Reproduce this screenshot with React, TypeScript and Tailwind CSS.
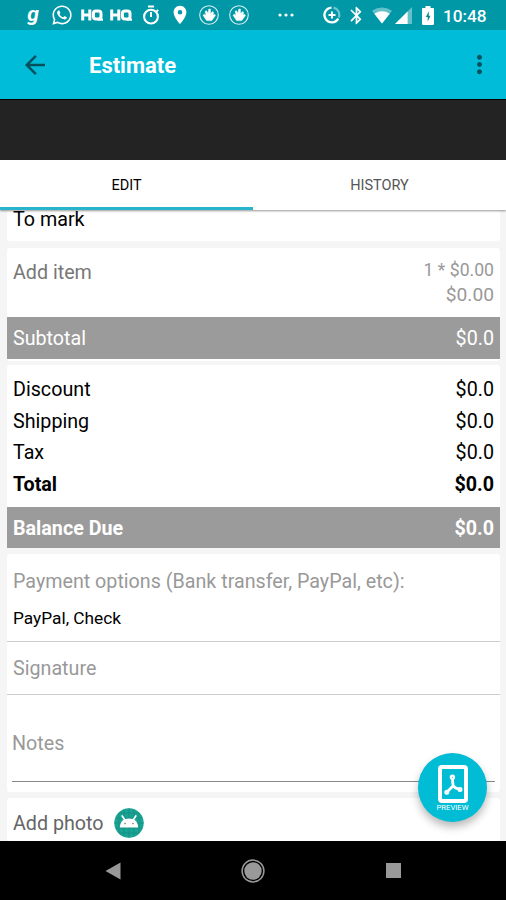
import type { ReactNode } from "react";
import { clsx } from "clsx";
import { FaWhatsapp } from "react-icons/fa";
import { MdArrowBack, MdBluetooth, MdLocationOn, MdMoreVert } from "react-icons/md";

const totals = [
  { label: "Discount", amount: "$0.0" },
  { label: "Shipping", amount: "$0.0" },
  { label: "Tax", amount: "$0.0" },
  { label: "Total", amount: "$0.0", strong: true },
];

function HqLogo({ className }: { className?: string }) {
  return (
    <svg
      viewBox="0 0 22 14"
      className={clsx("h-[14px] w-[22px] shrink-0", className)}
      fill="none"
      stroke="currentColor"
      strokeWidth="3"
    >
      <path d="M1.7 1.5v11M8.8 1.5v11M1.5 7H9" />
      <rect x="12.4" y="3" width="7.6" height="8" rx="2.6" />
      <path d="M16.5 11.6H22" strokeWidth="2.2" />
    </svg>
  );
}

function TimerIcon() {
  return (
    <svg viewBox="0 0 18 20" className="ml-[10px] h-5 w-[18px] shrink-0" fill="none" stroke="currentColor">
      <circle cx="9" cy="11.6" r="6.9" strokeWidth="2.1" />
      <path d="M6 1.6h6M9 7v5M14.6 5l1.6 1.3" strokeWidth="2" />
    </svg>
  );
}

// Round badge with a raised hand
function HandIcon({ className }: { className?: string }) {
  return (
    <svg viewBox="0 0 20 20" className={clsx("h-5 w-5 shrink-0", className)}>
      <circle cx="10" cy="10" r="9.3" fill="none" stroke="currentColor" strokeWidth="1.1" opacity="0.85" />
      <path
        d="M7.6 15.6 4 10.2 5.2 9.2 7 10.4 6.2 6.2 7.6 5.8 9 8.6 9.8 4H11.4L11.5 8.8 13.6 6.6 14.6 7.4 13.9 10 15.9 9.4 16.4 10.6 12.8 15.6Z"
        fill="currentColor"
        stroke="currentColor"
        strokeWidth="0.5"
      />
    </svg>
  );
}

function DataSaverIcon() {
  return (
    <svg viewBox="0 0 18 18" className="ml-[29px] h-[18px] w-[18px] shrink-0" fill="none" stroke="currentColor">
      <path d="M8.5 1.6A7.4 7.4 0 1 0 15.3 12.7" strokeWidth="2.4" />
      <path d="M10.5 1.6A7.4 7.4 0 0 1 15.8 11.5" strokeWidth="2.1" opacity="0.45" />
      <path d="M9 5.5v7M5.5 9h7" strokeWidth="2" />
    </svg>
  );
}

function WifiIcon() {
  return (
    <svg viewBox="0 0 20 17" className="ml-[5px] h-[17px] w-5 shrink-0" fill="currentColor">
      <path d="M0 3.8Q10-3 20 3.8L10 16.5Z" opacity="0.4" />
      <path d="M2.3 6.7Q10 1.8 17.7 6.7L10 16.5Z" />
    </svg>
  );
}

function SignalIcon() {
  return (
    <svg viewBox="0 0 17 17" className="ml-[3px] h-[17px] w-[17px] shrink-0" fill="currentColor">
      <path d="M17 0V17H0Z" opacity="0.4" />
      <path d="M12.6 4.4V17H0Z" />
    </svg>
  );
}

function BatteryIcon() {
  return (
    <svg viewBox="0 0 12 19" className="ml-[10px] h-[19px] w-3 shrink-0">
      <path d="M3.5 0h5v2H11a1 1 0 0 1 1 1v15a1 1 0 0 1-1 1H1a1 1 0 0 1-1-1V3a1 1 0 0 1 1-1h2.5Z" fill="currentColor" />
      <path d="M7 5.2 3.8 11H5.7V15.6L8.5 9.8H6.7Z" fill="#0a8794" />
    </svg>
  );
}

function StatusBar() {
  return (
    <div className="flex h-[30px] shrink-0 items-center bg-[#0097a7] pl-[26px] text-white">
      <span className="w-[14px] shrink-0 pb-px text-center text-[21px] leading-none font-bold italic">g</span>
      <FaWhatsapp className="ml-[11px] h-[22px] w-[22px] shrink-0" />
      <HqLogo className="ml-2" />
      <HqLogo className="ml-[7px]" />
      <TimerIcon />
      <MdLocationOn className="ml-[9px] h-[22px] w-[22px] shrink-0" />
      <HandIcon className="ml-2" />
      <HandIcon className="ml-[10px]" />
      <svg viewBox="0 0 16 4" className="ml-[29px] h-1 w-4 shrink-0" fill="currentColor">
        <circle cx="2" cy="2" r="1.6" />
        <circle cx="8" cy="2" r="1.6" />
        <circle cx="14" cy="2" r="1.6" />
      </svg>
      <DataSaverIcon />
      <MdBluetooth className="ml-[5px] h-[21px] w-[21px] shrink-0" />
      <WifiIcon />
      <SignalIcon />
      <BatteryIcon />
      <span className="ml-[9px] pt-[3px] text-[17.2px] leading-none font-medium">10:48</span>
    </div>
  );
}

function Tab({ label, active }: { label: string; active?: boolean }) {
  return (
    <button
      className={clsx(
        "h-full flex-1 border-b-[3px] pt-[4px] text-[14.5px]",
        active ? "border-[#28b5cb] text-black" : "border-transparent text-[#555]"
      )}
    >
      {label}
    </button>
  );
}

function Row({ label, amount, className }: { label: string; amount: string; className?: string }) {
  return (
    <div className={clsx("flex items-center justify-between px-[6px] pt-[2px]", className)}>
      <span>{label}</span>
      <span>{amount}</span>
    </div>
  );
}

function Card({ children, className }: { children: ReactNode; className?: string }) {
  return <section className={clsx("shrink-0 rounded-[3px] bg-white", className)}>{children}</section>;
}

function AndroidBadge() {
  return (
    <svg viewBox="0 0 30 30" className="ml-[10px] h-[30px] w-[30px]">
      <circle cx="15" cy="15" r="14.7" fill="#1ba394" />
      <path
        d="M5 5v20M10 2v26M15 0v30M20 2v26M25 5v20M5 5h20M2 10h26M0 15h30M2 20h26M5 25h20"
        stroke="#148a7e"
        strokeWidth="0.6"
      />
      <path d="M10.5 11.5 8.2 8M19.5 11.5l2.3-3.5" stroke="#fff" strokeWidth="1.7" strokeLinecap="round" />
      <path d="M5.8 19.6C6 13.5 9.5 10.4 15 10.4s9 3.1 9.2 9.2Z" fill="#fff" />
      <circle cx="11" cy="15.6" r="0.8" fill="#777" />
      <circle cx="19" cy="15.6" r="0.8" fill="#777" />
    </svg>
  );
}

function PreviewButton() {
  return (
    <button className="absolute top-[543px] left-[418px] flex h-[69px] w-[69px] flex-col items-center rounded-full bg-[#00bcd4] pt-[12px] text-white shadow-[0_5px_8px_rgba(0,0,0,0.28)]">
      <svg viewBox="0 0 30 38" className="h-[38px] w-[30px] shrink-0" fill="none" stroke="currentColor">
        <rect x="2" y="2" width="26" height="34" rx="2" strokeWidth="4" />
        <path d="M14.5 13Q14.6 18 15.2 20.8L9 27M15.2 20.8Q17 23.5 22 24.3" strokeWidth="2.8" strokeLinejoin="round" />
        <circle cx="14.4" cy="12.3" r="1.6" strokeWidth="2.2" />
        <circle cx="8.8" cy="27.2" r="1.4" strokeWidth="2.2" />
        <circle cx="22" cy="24.4" r="1.4" strokeWidth="2.2" />
      </svg>
      <span className="text-[7.7px] leading-[9px]">PREVIEW</span>
    </button>
  );
}

function NavBar() {
  return (
    <nav className="flex h-[59px] shrink-0 items-center bg-black pl-[105px] text-[#999]">
      <svg viewBox="0 0 16 18" className="h-[18px] w-4" fill="currentColor">
        <path d="M15.5 0.5v17L0.5 9Z" />
      </svg>
      <svg viewBox="0 0 24 24" className="ml-[120px] h-6 w-6">
        <circle cx="12" cy="12" r="10.9" fill="none" stroke="currentColor" strokeWidth="1.5" />
        <circle cx="12" cy="12" r="8.7" fill="currentColor" />
      </svg>
      <div className="ml-[121px] h-[15px] w-[15px] bg-[#999]" />
    </nav>
  );
}

export default function App() {
  return (
    <div className="flex h-[900px] w-[506px] flex-col overflow-hidden bg-[#f5f5f5] font-['Roboto',sans-serif] text-[19.7px] leading-6 text-black">
      <StatusBar />

      <header className="flex h-[69px] shrink-0 items-center bg-[#00bcd9] text-[#04515d]">
        <MdArrowBack className="ml-[20px] h-[30px] w-[30px]" />
        <h1 className="ml-[39px] pt-[2px] text-[22px] font-bold text-white">Estimate</h1>
        <MdMoreVert className="mr-[12px] ml-auto h-[29px] w-[29px]" />
      </header>

      <div className="h-[61px] shrink-0 border-t border-black bg-[#232323]" />

      <div className="z-10 flex h-[50px] shrink-0 bg-white shadow-[0_1px_2px_rgba(0,0,0,0.4)]">
        <Tab label="EDIT" active />
        <Tab label="HISTORY" />
      </div>

      <main className="relative flex h-[631px] shrink-0 flex-col pr-[6px] pl-[7px]">
        <Card className="h-[31px] px-[6px]">
          <p className="leading-5">To mark</p>
        </Card>

        <Card className="mt-[7px] h-[113px] text-[#777]">
          <div className="flex h-[69px] justify-between px-[6px] pt-[13px]">
            <span>Add item</span>
            <div className="flex flex-col items-end text-[#999]">
              <span className="-mt-[3px] text-[17.6px]">1 * $0.00</span>
              <span className="mt-[1px] text-[19.2px]">$0.00</span>
            </div>
          </div>
          <Row label="Subtotal" amount="$0.0" className="h-[42px] bg-[#9b9b9b] text-white" />
        </Card>

        <Card className="mt-[4px] h-[183px]">
          <div className="flex h-[142px] flex-col pt-[8.5px]">
            {totals.map((row) => (
              <Row
                key={row.label}
                label={row.label}
                amount={row.amount}
                className={clsx("h-[31.6px]", row.strong && "font-bold")}
              />
            ))}
          </div>
          <Row label="Balance Due" amount="$0.0" className="h-[41px] bg-[#9b9b9b] font-bold text-white" />
        </Card>

        <Card className="mt-[6px] h-[238px] text-[#999]">
          <div className="h-[88px] border-b border-[#ccc] px-[6px] pt-[16px]">
            <p>Payment options (Bank transfer, PayPal, etc):</p>
            <p className="mt-[12px] text-[17.3px] text-black">PayPal, Check</p>
          </div>
          <div className="flex h-[53px] items-center border-b border-[#ccc] px-[6px] pt-[2px]">Signature</div>
          <div className="mr-[5px] ml-[5px] h-[87px] border-b border-[#888] pt-[37px]">Notes</div>
        </Card>

        <Card className="mt-[6px] h-[43px] text-[#666]">
          <div className="flex items-center px-[6px] pt-[10px]">
            <span className="pt-[2px]">Add photo</span>
            <AndroidBadge />
          </div>
        </Card>

        <PreviewButton />
      </main>

      <NavBar />
    </div>
  );
}
